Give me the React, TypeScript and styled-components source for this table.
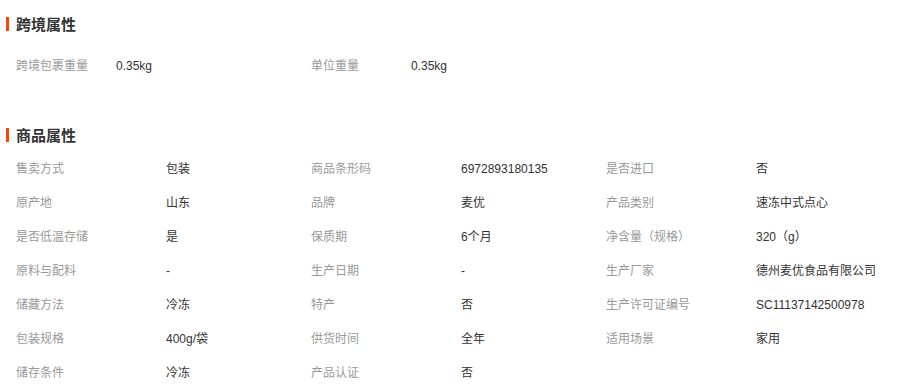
import React from "react";
import styled, { createGlobalStyle } from "styled-components";

const Global = createGlobalStyle`
  html, body { margin: 0; padding: 0; background: #fff; }
  body { font-family: "Liberation Sans", Arial, "Noto Sans CJK SC", sans-serif; font-size: 12px; color: #333; }
`;

const Page = styled.div`
  width: 922px;
  padding-top: 14px;
`;

const Section = styled.section<{ $gap: number }>`
  display: flex;
  flex-direction: column;
  gap: ${(p) => p.$gap}px;
  & + & { margin-top: 42px; }
`;

const Title = styled.h3`
  margin: 0;
  position: relative;
  height: 20px;
  line-height: 20px;
  padding-left: 16px;
  font-size: 15px;
  font-weight: bold;
  color: #333;
  font-family: "Noto Sans CJK SC", sans-serif;
  &::before {
    content: "";
    position: absolute;
    left: 6px;
    top: 3px;
    width: 3px;
    height: 14px;
    background: #ff4400;
  }
`;

const Grid = styled.div<{ $label: number; $value: number }>`
  display: grid;
  grid-template-columns: repeat(3, ${(p) => p.$label}px ${(p) => p.$value}px);
  grid-auto-rows: 34px;
  padding-left: 16px;
`;

const Label = styled.div`
  color: #999;
  line-height: 34px;
  white-space: nowrap;
`;

const Value = styled.div`
  color: #333;
  line-height: 34px;
  white-space: nowrap;
`;

const cross: [string, string][] = [
  ["跨境包裹重量", "0.35kg"],
  ["单位重量", "0.35kg"],
];

const goods: [string, string][] = [
  ["售卖方式", "包装"],
  ["商品条形码", "6972893180135"],
  ["是否进口", "否"],
  ["原产地", "山东"],
  ["品牌", "麦优"],
  ["产品类别", "速冻中式点心"],
  ["是否低温存储", "是"],
  ["保质期", "6个月"],
  ["净含量（规格）", "320（g）"],
  ["原料与配料", "-"],
  ["生产日期", "-"],
  ["生产厂家", "德州麦优食品有限公司"],
  ["储藏方法", "冷冻"],
  ["特产", "否"],
  ["生产许可证编号", "SC11137142500978"],
  ["包装规格", "400g/袋"],
  ["供货时间", "全年"],
  ["适用场景", "家用"],
  ["储存条件", "冷冻"],
  ["产品认证", "否"],
];

const Pairs = ({ items }: { items: [string, string][] }) => (
  <>
    {items.map(([k, v]) => (
      <React.Fragment key={k}>
        <Label>{k}</Label>
        <Value>{v}</Value>
      </React.Fragment>
    ))}
  </>
);

export default function App() {
  return (
    <Page>
      <Global />
      <Section $gap={15}>
        <Title>跨境属性</Title>
        <Grid $label={100} $value={195}>
          <Pairs items={cross} />
        </Grid>
      </Section>
      <Section $gap={7}>
        <Title>商品属性</Title>
        <Grid $label={150} $value={145}>
          <Pairs items={goods} />
        </Grid>
      </Section>
    </Page>
  );
}
